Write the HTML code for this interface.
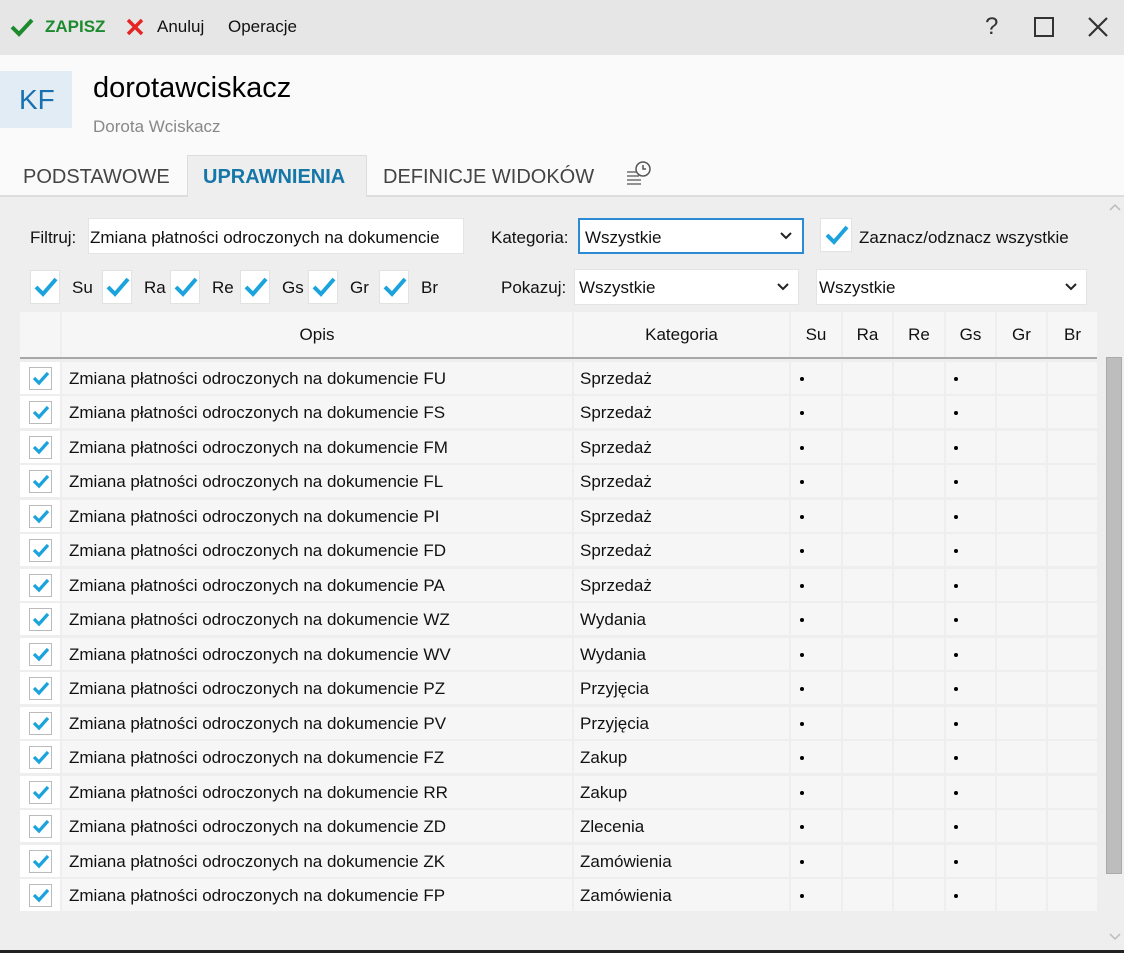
<!DOCTYPE html>
<html><head><meta charset="utf-8"><style>
*{margin:0;padding:0;box-sizing:border-box}
body{width:1124px;height:953px;overflow:hidden;background:#eeeeee;font-family:"Liberation Sans",sans-serif;color:#111;position:relative;font-size:17px}
.a{position:absolute;white-space:nowrap}
.cb{position:absolute;background:#fff;border:1px solid #e2e2e2}
.cell{position:absolute;background:#f6f6f6}
.inp{position:absolute;background:#fff;border:1px solid #e4e4e4}
</style></head><body>
<div class="a" style="left:0;top:0;width:1124px;height:55px;background:#e6e6e6"></div>
<svg class="a" style="left:10px;top:17px" width="24" height="20"><path d="M2 10 L9 17 L22 3" stroke="#1e8a2e" stroke-width="4" fill="none"/></svg>
<div class="a" style="left:45px;top:17px;color:#1e8a2e;font-weight:bold;font-size:17px">ZAPISZ</div>
<svg class="a" style="left:126px;top:18px" width="18" height="18"><path d="M2 2 L16 16 M16 2 L2 16" stroke="#e52424" stroke-width="3.5"/></svg>
<div class="a" style="left:157px;top:17px">Anuluj</div>
<div class="a" style="left:228px;top:17px">Operacje</div>
<div class="a" style="left:985px;top:13px;font-size:24px;color:#333">?</div>
<div class="a" style="left:1034px;top:17px;width:20px;height:20px;border:2px solid #333"></div>
<svg class="a" style="left:1088px;top:17px" width="20" height="20"><path d="M1 1 L19 19 M19 1 L1 19" stroke="#333" stroke-width="2.2"/></svg>
<div class="a" style="left:0;top:55px;width:1124px;height:100px;background:#fafafa"></div>
<div class="a" style="left:0;top:71px;width:72px;height:57px;background:#e1ecf4"></div>
<div class="a" style="left:19px;top:84px;font-size:28px;color:#1a6fb0">KF</div>
<div class="a" style="left:93px;top:72px;font-size:29px;color:#000">dorotawciskacz</div>
<div class="a" style="left:93px;top:117px;font-size:17px;color:#888">Dorota Wciskacz</div>
<div class="a" style="left:0;top:155px;width:1124px;height:42px;background:#fafafa;border-bottom:2px solid #ddd"></div>
<div class="a" style="left:187px;top:155px;width:180px;height:42px;background:#eeeeee;border:1px solid #ddd;border-bottom:none"></div>
<div class="a" style="left:23px;top:166px;font-size:20px;color:#444">PODSTAWOWE</div>
<div class="a" style="left:203px;top:166px;font-size:20px;color:#1576a8;font-weight:bold">UPRAWNIENIA</div>
<div class="a" style="left:383px;top:166px;font-size:20px;color:#444">DEFINICJE WIDOKÓW</div>
<svg class="a" style="left:626px;top:160px" width="26" height="26"><path d="M1 12h10M1 16h12M1 20h14M1 24h14" stroke="#555" stroke-width="1.3"/><circle cx="17" cy="9" r="7" stroke="#555" stroke-width="1.5" fill="none"/><path d="M17 5v4h3" stroke="#555" stroke-width="1.5" fill="none"/></svg>
<div class="a" style="left:30px;top:228px">Filtruj:</div>
<div class="inp" style="left:88px;top:218px;width:376px;height:36px"></div>
<div class="a" style="left:90px;top:228px">Zmiana płatności odroczonych na dokumencie</div>
<div class="a" style="left:491px;top:228px">Kategoria:</div>
<div class="a" style="left:578px;top:218px;width:226px;height:36px;background:#fff;border:2px solid #2a8ad4"></div>
<div class="a" style="left:585px;top:228px">Wszystkie</div>
<svg class="a" style="left:779px;top:231px" width="14" height="10"><path d="M2 2 L7 7 L12 2" stroke="#222" stroke-width="2" fill="none"/></svg>
<div class="cb" style="left:820px;top:218px;width:32px;height:34px"></div>
<svg class="a" style="left:824px;top:224px" width="26" height="22"><path d="M3 11 L10 18 L23 3" stroke="#1aa3dc" stroke-width="4" fill="none"/></svg>
<div class="a" style="left:859px;top:228px">Zaznacz/odznacz wszystkie</div>
<div class="a" style="left:501px;top:278px">Pokazuj:</div>
<div class="inp" style="left:574px;top:269px;width:225px;height:36px"></div>
<div class="a" style="left:579px;top:278px">Wszystkie</div>
<svg class="a" style="left:776px;top:282px" width="14" height="10"><path d="M2 2 L7 7 L12 2" stroke="#222" stroke-width="2" fill="none"/></svg>
<div class="inp" style="left:816px;top:269px;width:271px;height:36px"></div>
<div class="a" style="left:819px;top:278px">Wszystkie</div>
<svg class="a" style="left:1064px;top:282px" width="14" height="10"><path d="M2 2 L7 7 L12 2" stroke="#222" stroke-width="2" fill="none"/></svg>
<div id="fl"></div>
<div class="a" style="left:20px;top:312px;width:1077px;height:47px;background:#eeeeee"></div>
<div id="tb"></div>
<div class="a" style="left:1106px;top:357px;width:16px;height:517px;background:#bdbdbd;border:1px solid #aaa"></div>
<svg class="a" style="left:1108px;top:203px" width="14" height="10"><path d="M2 7 L7 2 L12 7" stroke="#bbb" stroke-width="1.5" fill="none"/></svg>
<svg class="a" style="left:1108px;top:932px" width="14" height="10"><path d="M2 2 L7 7 L12 2" stroke="#bbb" stroke-width="1.5" fill="none"/></svg>
<div class="a" style="left:0;top:950px;width:1124px;height:3px;background:#222"></div>
<script>
var h='';var f=[['Su',30],['Ra',102],['Re',170],['Gs',240],['Gr',308],['Br',379]];
f.forEach(function(x){h+='<div class="cb" style="left:'+x[1]+'px;top:270px;width:30px;height:34px"></div><svg class="a" style="left:'+(x[1]+3)+'px;top:276px" width="26" height="22"><path d="M3 11 L10 18 L23 3" stroke="#1aa3dc" stroke-width="4" fill="none"/></svg><div class="a" style="left:'+(x[1]+42)+'px;top:278px">'+x[0]+'</div>';});
document.getElementById('fl').innerHTML=h;
var cols=[[20,60],[62,572],[574,789],[791,841],[843,892],[894,944],[946,995],[997,1046],[1048,1097]];
var hd=['','Opis','Kategoria','Su','Ra','Re','Gs','Gr','Br'];
var t='';
cols.forEach(function(c,i){t+='<div class="cell" style="left:'+c[0]+'px;top:312px;width:'+(c[1]-c[0])+'px;height:45px;text-align:center;line-height:45px">'+hd[i]+'</div>';});
t+='<div class="a" style="left:20px;top:357px;width:1077px;height:2px;background:#a8a8a8"></div>';
var codes=['FU','FS','FM','FL','PI','FD','PA','WZ','WV','PZ','PV','FZ','RR','ZD','ZK','FP'];
var cats=['Sprzedaż','Sprzedaż','Sprzedaż','Sprzedaż','Sprzedaż','Sprzedaż','Sprzedaż','Wydania','Wydania','Przyjęcia','Przyjęcia','Zakup','Zakup','Zlecenia','Zamówienia','Zamówienia'];
for(var r=0;r<16;r++){var y=Math.round(362+r*34.47);
cols.forEach(function(c,i){var bg=i==0?'#fff':'#f6f6f6';t+='<div class="cell" style="background:'+bg+';left:'+c[0]+'px;top:'+y+'px;width:'+(c[1]-c[0])+'px;height:32px"></div>';});
t+='<div class="a" style="left:29px;top:'+(y+5)+'px;width:23px;height:23px;background:#fff;border:1px solid #bbb"></div><svg class="a" style="left:32px;top:'+(y+9)+'px" width="18" height="15"><path d="M2 7 L7 12 L16 2" stroke="#1aa3dc" stroke-width="3.2" fill="none"/></svg>';
t+='<div class="a" style="left:69px;top:'+(y+7)+'px">Zmiana płatności odroczonych na dokumencie '+codes[r]+'</div>';
t+='<div class="a" style="left:580px;top:'+(y+7)+'px">'+cats[r]+'</div>';
t+='<div class="a" style="left:800px;top:'+(y+15)+'px;width:4px;height:4px;border-radius:2px;background:#000"></div><div class="a" style="left:954px;top:'+(y+15)+'px;width:4px;height:4px;border-radius:2px;background:#000"></div>';}
document.getElementById('tb').innerHTML=t;
</script>
</body></html>
